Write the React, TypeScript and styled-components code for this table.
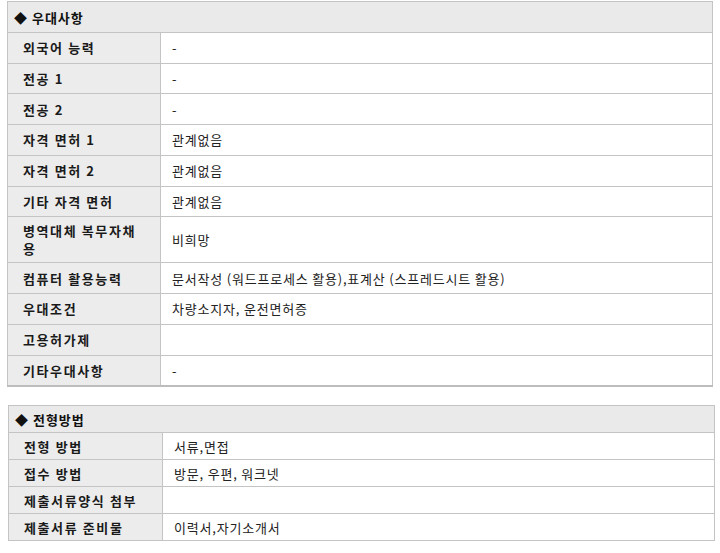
import React from "react";
import styled, { createGlobalStyle } from "styled-components";

const GlobalStyle = createGlobalStyle`
  body {
    margin: 0;
    background: #fff;
    font-family: "Noto Sans CJK KR", "Noto Sans", sans-serif;
    font-size: 13px;
    color: #222;
  }
`;

const Page = styled.div`
  padding: 1px 0 0 7px;
`;

const Table = styled.table<{ $width: number; $rowH: number; $shift: number; $thickBottom?: boolean }>`
  width: ${(p) => p.$width}px;
  margin: 0 0 18px ${(p) => p.$shift}px;
  border-collapse: collapse;
  table-layout: fixed;
  border-bottom: ${(p) => (p.$thickBottom ? "2px solid #bdbdbd" : "1px solid #c4c4c4")};

  td, th {
    height: ${(p) => p.$rowH}px;
  }
`;

const HeadCell = styled.th`
  background: #eaeaea;
  border: 1px solid #c4c4c4;
  text-align: left;
  font-weight: bold;
  padding: 1px 0 0 6px;
  color: #111;
  letter-spacing: 1px;
`;

const Label = styled.td<{ $tall?: boolean }>`
  background: #ececec;
  border: 1px solid #c4c4c4;
  padding: 1px 18px 0 15px;
  font-weight: bold;
  color: #1a1a1a;
  line-height: 18px;
  letter-spacing: 1.6px;
  ${(p) => (p.$tall ? "height: 44px !important;" : "")}
`;

const Value = styled.td`
  border: 1px solid #c4c4c4;
  padding: 1px 0 0 11px;
  color: #222;
  line-height: 18px;
  letter-spacing: 0.8px;
`;

type Row = { label: string; value: string; tall?: boolean };

const prefs: Row[] = [
  { label: "외국어 능력", value: "-" },
  { label: "전공 1", value: "-" },
  { label: "전공 2", value: "-" },
  { label: "자격 면허 1", value: "관계없음" },
  { label: "자격 면허 2", value: "관계없음" },
  { label: "기타 자격 면허", value: "관계없음" },
  { label: "병역대체 복무자채용", value: "비희망", tall: true },
  { label: "컴퓨터 활용능력", value: "문서작성 (워드프로세스 활용),표계산 (스프레드시트 활용)" },
  { label: "우대조건", value: "차량소지자, 운전면허증" },
  { label: "고용허가제", value: "" },
  { label: "기타우대사항", value: "-" },
];

const selection: Row[] = [
  { label: "전형 방법", value: "서류,면접" },
  { label: "접수 방법", value: "방문, 우편, 워크넷" },
  { label: "제출서류양식 첨부", value: "" },
  { label: "제출서류 준비물", value: "이력서,자기소개서" },
];

const Section = ({
  title,
  rows,
  width,
  col,
  rowH,
  shift,
  thickBottom,
}: {
  title: string;
  rows: Row[];
  width: number;
  col: number;
  rowH: number;
  shift: number;
  thickBottom?: boolean;
}) => (
  <Table $width={width} $rowH={rowH} $shift={shift} $thickBottom={thickBottom}>
    <colgroup>
      <col style={{ width: col }} />
      <col />
    </colgroup>
    <thead>
      <tr>
        <HeadCell colSpan={2}>◆ {title}</HeadCell>
      </tr>
    </thead>
    <tbody>
      {rows.map((r) => (
        <tr key={r.label}>
          <Label $tall={r.tall}>{r.label}</Label>
          <Value>{r.value}</Value>
        </tr>
      ))}
    </tbody>
  </Table>
);

export default function App() {
  return (
    <>
      <GlobalStyle />
      <Page>
        <Section title="우대사항" rows={prefs} width={706} col={153} rowH={28.75} shift={0} thickBottom />
        <Section title="전형방법" rows={selection} width={707} col={154} rowH={25} shift={1} />
      </Page>
    </>
  );
}
